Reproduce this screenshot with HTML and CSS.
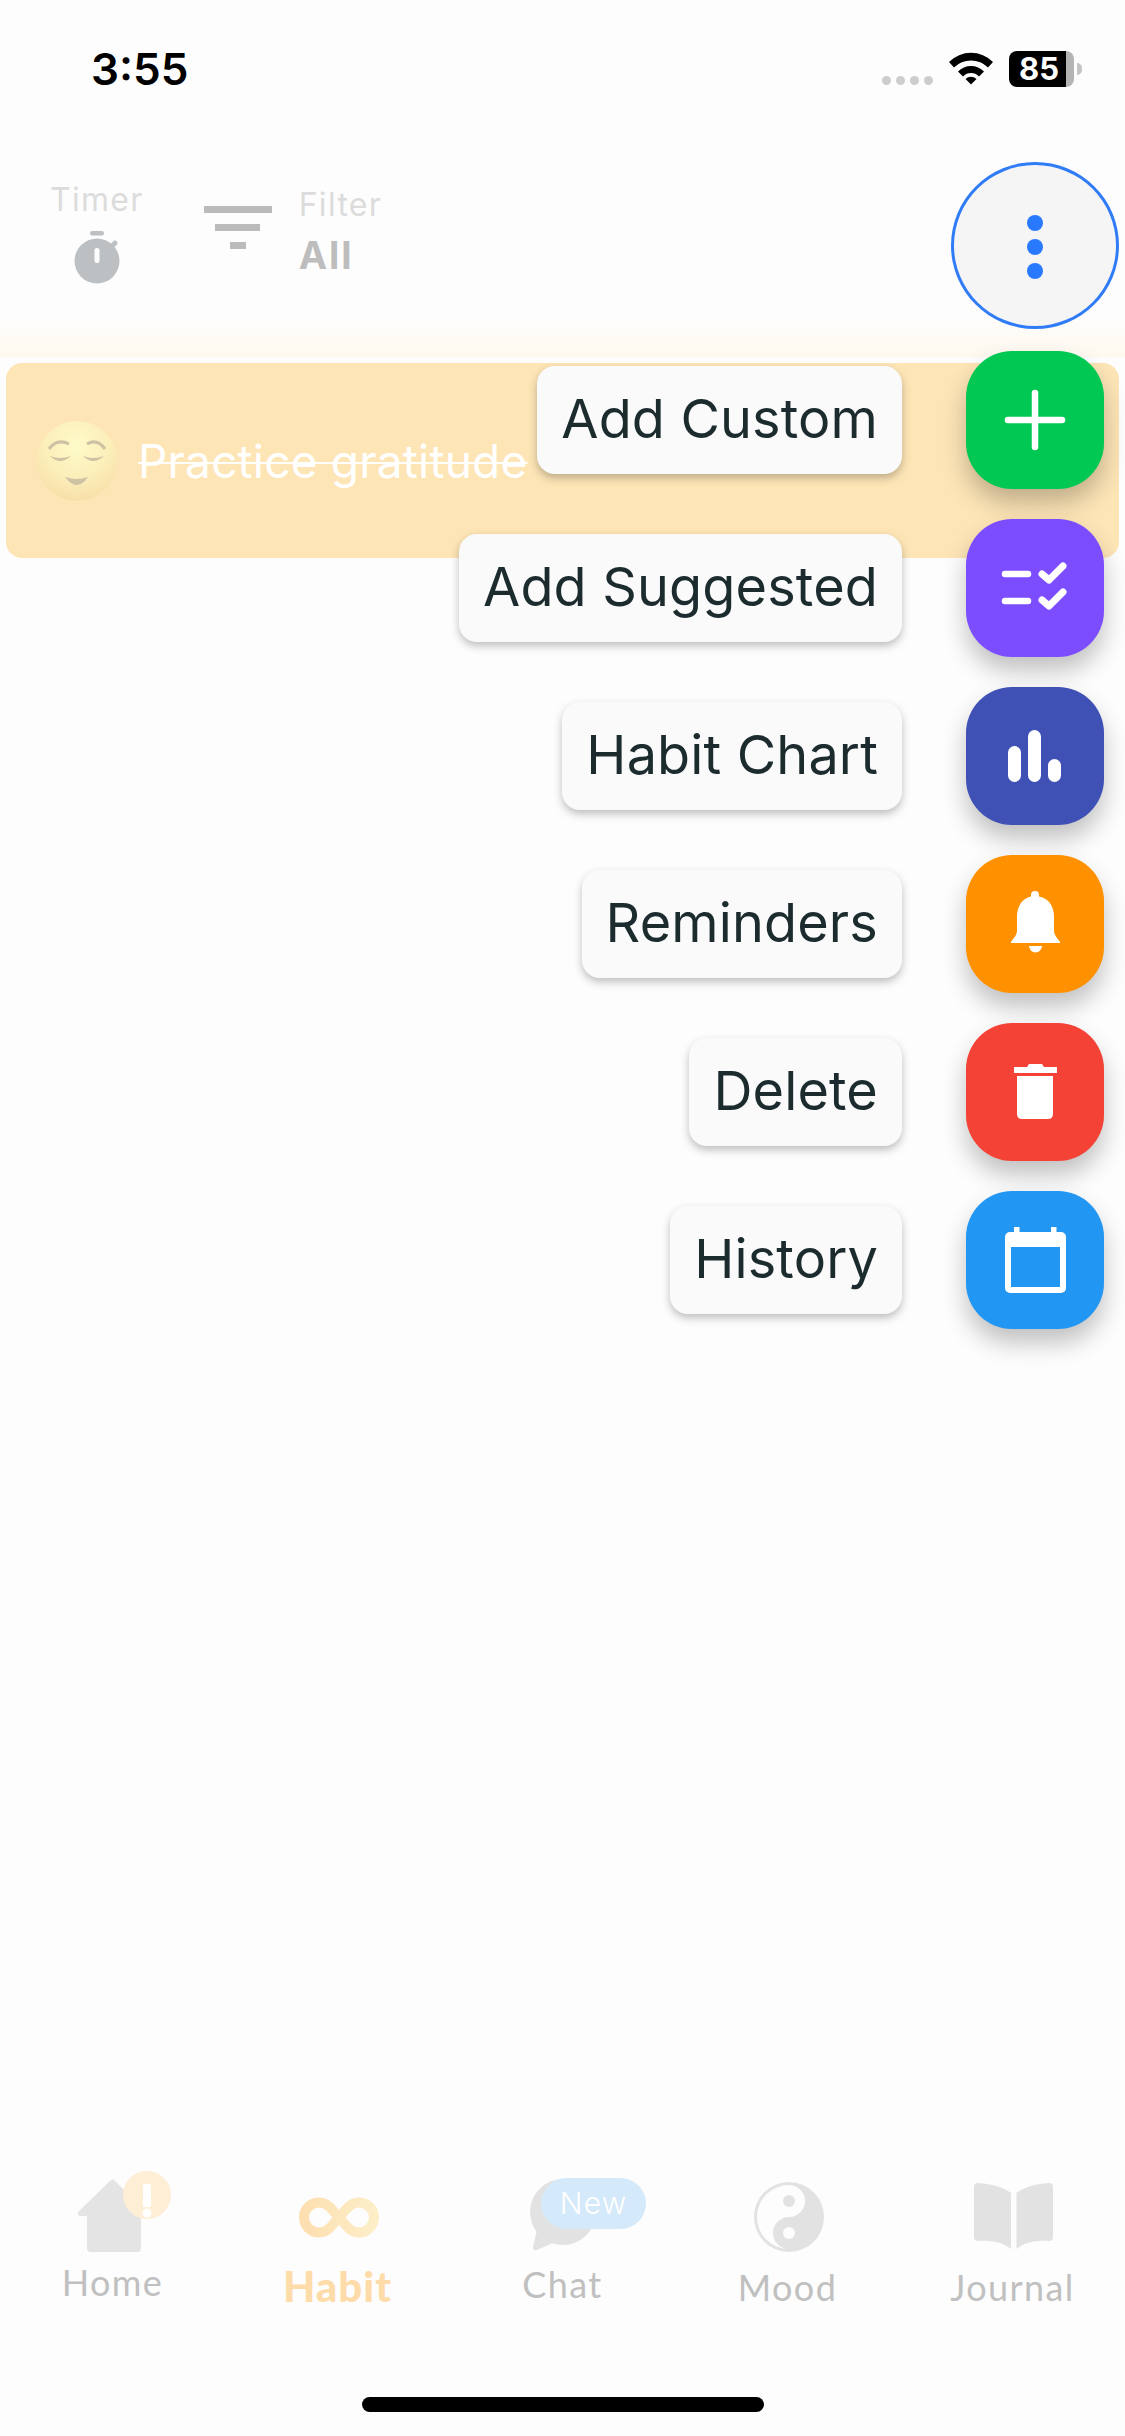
FILE: index.html
```html
<!DOCTYPE html>
<html lang="en">
<head>
    <meta charset="UTF-8">
    <title>Habit</title>
    <link rel="stylesheet" href="styles.css">
</head>
<body>
<div class="screen">
    <div class="status-bar">
        <span class="status-time">3:55</span>
        <div class="status-icons">
            <div class="signal-dots"><i></i><i></i><i></i><i></i></div>
            <svg class="wifi" width="46" height="34" viewBox="0 0 46 34">
                <path d="M1 11 A31 31 0 0 1 45 11 L40 16.5 A24 24 0 0 0 6 16.5Z"/>
                <path d="M10 20.5 A18 18 0 0 1 36 20.5 L31 25.5 A11 11 0 0 0 15 25.5Z"/>
                <path d="M17.500 28 A8 8 0 0 1 28.500 28 L23 33.500Z"/>
            </svg>
            <div class="battery">
                <div class="battery-body"><span class="battery-level">85</span></div>
                <div class="battery-nub"></div>
            </div>
        </div>
    </div>

    <div class="top-bar">
        <div class="timer">
            <span class="top-label">Timer</span>
            <svg width="46" height="54" viewBox="0 0 46 54">
                <rect x="16" y="0" width="14" height="4.500" rx="2.200" fill="#bdc0c2"/>
                <rect x="37" y="9" width="5" height="9" rx="2" transform="rotate(45 39.500 13.500)" fill="#bdc0c2"/>
                <circle cx="23" cy="30" r="22.500" fill="#bdc0c2"/>
                <rect x="20.500" y="17" width="5" height="15" rx="2.500" fill="#fdfdfd"/>
            </svg>
        </div>
        <div class="filter">
            <div class="filter-icon"><i></i><i></i><i></i></div>
            <div class="filter-text">
                <span class="top-label">Filter</span>
                <span class="filter-value">All</span>
            </div>
        </div>
    </div>

    <div class="fade-strip"></div>

    <div class="habit-card">
        <svg width="80" height="80" viewBox="0 0 80 80">
            <defs>
                <radialGradient id="face" cx="50%" cy="30%" r="70%">
                    <stop offset="0" stop-color="#fefbc8"/>
                    <stop offset="0.6" stop-color="#fbeeb9"/>
                    <stop offset="1" stop-color="#f8dfa8"/>
                </radialGradient>
            </defs>
            <circle cx="40" cy="40" r="40" fill="url(#face)"/>
            <path d="M12 28 Q20 17 32 23" class="face-line"/>
            <path d="M50 23 Q60 17 68 28" class="face-line"/>
            <path d="M13 35 Q23 45 34 35 Q23 39 13 35Z" class="face-fill"/>
            <path d="M46 35 Q56 45 67 35 Q56 39 46 35Z" class="face-fill"/>
            <path d="M28 56 Q40 60 51 56 Q40 72 28 56Z" class="face-fill"/>
        </svg>
        <span class="habit-name">Practice gratitude</span>
    </div>

    <div class="tab-bar">
        <div class="tab">
            <svg width="140" height="90" viewBox="0 0 140 90">
                <path d="M71 10 L107 46 H98 V78 Q98 82 94 82 H48 Q44 82 44 78 V46 H37 Q33 44 36 41 L67 11 Q71 8 71 10Z" fill="#e4e4e4"/>
                <circle cx="104" cy="25" r="24" fill="#fdeed5"/>
                <rect x="100" y="14" width="8" height="23" rx="2" fill="#fff"/>
                <circle cx="104" cy="43" r="4.500" fill="#fff"/>
            </svg>
            <span class="tab-label">Home</span>
        </div>
        <div class="tab">
            <svg width="140" height="90" viewBox="0 0 140 90">
                <defs>
                    <linearGradient id="loop" x1="0" x2="1" y1="0" y2="0">
                        <stop offset="0" stop-color="#fddfb0"/>
                        <stop offset="1" stop-color="#fdeec8"/>
                    </linearGradient>
                </defs>
                <path d="M71 47.500 C64 40 60 32.500 51 32.500 A15 15 0 0 0 51 62.500 C60 62.500 64 55 71 47.500 C78 40 82 32.500 91 32.500 A15 15 0 0 1 91 62.500 C82 62.500 78 55 71 47.500Z" fill="none" stroke="url(#loop)" stroke-width="10"/>
            </svg>
            <span class="tab-label tab-label-active">Habit</span>
        </div>
        <div class="tab">
            <svg width="140" height="90" viewBox="0 0 140 90">
                <ellipse cx="70" cy="42" rx="33" ry="33" fill="#e2e2e2"/>
                <path d="M44 60 L40 77 Q40 81 44 80 L60 73Z" fill="#e2e2e2"/>
            </svg>
            <span class="new-badge">New</span>
            <span class="tab-label tab-label-mid">Chat</span>
        </div>
        <div class="tab">
            <svg width="140" height="90" viewBox="0 0 140 90">
                <circle cx="71" cy="47" r="35" fill="#e2e2e2"/>
                <path d="M71 15 A16 16 0 0 1 71 47 A16 16 0 0 0 71 79 A32 32 0 0 1 71 15Z" fill="#fdfdfd"/>
                <circle cx="71" cy="31" r="6" fill="#e2e2e2"/>
                <circle cx="71" cy="63" r="6" fill="#fdfdfd"/>
            </svg>
            <span class="tab-label tab-label-low">Mood</span>
        </div>
        <div class="tab">
            <svg width="140" height="90" viewBox="0 0 140 90">
                <path d="M31 17 Q31 13 35 13 C50 14 62 18 68 23 V79 C60 72 46 70 35 71 Q31 71 31 67Z" fill="#e2e2e2"/>
                <path d="M110 17 Q110 13 106 13 C91 14 79 18 73.500 23 V79 C81 72 95 70 106 71 Q110 71 110 67Z" fill="#e2e2e2"/>
            </svg>
            <span class="tab-label tab-label-low">Journal</span>
        </div>
    </div>
    <div class="home-indicator"></div>

    <div class="fab-menu">
        <div class="menu-toggle"><i></i><i></i><i></i></div>

        <div class="fab-row">
            <span class="fab-label">Add Custom</span>
            <div class="fab fab-green">
                <svg width="138" height="138" viewBox="0 0 138 138">
                    <path d="M69 42 V96 M42 69 H96" stroke="#fff" stroke-width="6.500" stroke-linecap="round"/>
                </svg>
            </div>
        </div>
        <div class="fab-row">
            <span class="fab-label">Add Suggested</span>
            <div class="fab fab-purple">
                <svg width="138" height="138" viewBox="0 0 138 138">
                    <path d="M39 55 H62 M39 82 H62" stroke="#fff" stroke-width="6.500" stroke-linecap="round"/>
                    <path d="M76 55 L83 61 L97 47 M76 81 L83 87 L97 73" fill="none" stroke="#fff" stroke-width="7" stroke-linecap="round" stroke-linejoin="round"/>
                </svg>
            </div>
        </div>
        <div class="fab-row">
            <span class="fab-label">Habit Chart</span>
            <div class="fab fab-indigo">
                <svg width="138" height="138" viewBox="0 0 138 138">
                    <rect x="42" y="59" width="13" height="36" rx="6.500" fill="#fff"/>
                    <rect x="62" y="43" width="13" height="52" rx="6.500" fill="#fff"/>
                    <rect x="82" y="72" width="13" height="23" rx="6.500" fill="#fff"/>
                </svg>
            </div>
        </div>
        <div class="fab-row">
            <span class="fab-label">Reminders</span>
            <div class="fab fab-orange">
                <svg width="138" height="138" viewBox="0 0 138 138">
                    <path d="M69 36 A4 4 0 0 1 73 40 V41.500 C83 43 88 52 88 62 V76 C88 80 92 84 94 87 V88 H45 V87 C47 84 51 80 51 76 V62 C51 52 56 43 65 41.500 V40 A4 4 0 0 1 69 36Z" fill="#fff"/>
                    <path d="M63 91 H76 A6.500 6.500 0 0 1 63 91Z" fill="#fff"/>
                </svg>
            </div>
        </div>
        <div class="fab-row">
            <span class="fab-label">Delete</span>
            <div class="fab fab-red">
                <svg width="138" height="138" viewBox="0 0 138 138">
                    <path d="M48 44 H61 L63 41 H76 L78 44 H91 V50 H48Z" fill="#fff"/>
                    <path d="M51 53 H87 V91 Q87 96 82 96 H56 Q51 96 51 91Z" fill="#fff"/>
                </svg>
            </div>
        </div>
        <div class="fab-row">
            <span class="fab-label">History</span>
            <div class="fab fab-blue">
                <svg width="138" height="138" viewBox="0 0 138 138">
                    <rect x="48" y="36" width="5.500" height="8" fill="#fff"/>
                    <rect x="85" y="36" width="5.500" height="8" fill="#fff"/>
                    <rect x="39" y="41" width="61" height="61" rx="5" fill="#fff"/>
                    <rect x="45" y="56" width="49" height="40" fill="#2196f3"/>
                </svg>
            </div>
        </div>
    </div>
</div>
</body>
</html>
```

FILE: styles.css
```css
* {
    box-sizing: border-box;
}

body {
    margin: 0;
    background: #fdfdfd;
}

.screen {
    position: relative;
    width: 1125px;
    height: 2436px;
    overflow: hidden;
    display: flex;
    flex-direction: column;
    background: #fdfdfd;
    font-family: "Inter", "Liberation Sans", sans-serif;
}

/* status bar */
.status-bar {
    height: 170px;
    padding: 42px 43px 0 91px;
    display: flex;
    justify-content: space-between;
    align-items: flex-start;
    flex-shrink: 0;
}

.status-time {
    font-size: 44px;
    line-height: 54px;
    font-weight: 600;
    color: #000;
}

.status-icons {
    display: flex;
    align-items: flex-end;
    gap: 15px;
    padding-top: 9px;
}

.signal-dots {
    display: flex;
    gap: 5px;
    padding-bottom: 2px;
}

.signal-dots i {
    width: 9px;
    height: 9px;
    border-radius: 50%;
    background: #cdcdcd;
}

.wifi {
    fill: #000;
    margin-bottom: 2px;
}

.battery {
    display: flex;
    align-items: center;
    gap: 3px;
}

.battery-body {
    width: 65px;
    height: 36px;
    border-radius: 8px;
    background: linear-gradient(to right, #000 87%, #b4b4b4 87%);
    padding-left: 10px;
}

.battery-level {
    font-size: 31px;
    line-height: 36px;
    font-weight: 700;
    color: #fff;
    display: block;
}

.battery-nub {
    width: 5px;
    height: 12px;
    border-radius: 0 5px 5px 0;
    background: #c4c4c4;
}

/* timer + filter */
.top-bar {
    height: 150px;
    padding: 10px 0 0 50px;
    display: flex;
    align-items: flex-start;
    gap: 60px;
    flex-shrink: 0;
}

.timer {
    display: flex;
    flex-direction: column;
    align-items: center;
    gap: 11px;
}

.top-label {
    font-size: 32px;
    line-height: 40px;
    letter-spacing: 1.3px;
    color: #dcdcdc;
}

.filter {
    display: flex;
    gap: 27px;
}

.filter-icon {
    width: 68px;
    padding-top: 26px;
    display: flex;
    flex-direction: column;
    align-items: center;
    gap: 11px;
}

.filter-icon i {
    height: 7px;
    background: #bbb;
}

.filter-icon i:nth-child(1) {
    width: 68px;
}

.filter-icon i:nth-child(2) {
    width: 45px;
}

.filter-icon i:nth-child(3) {
    width: 16px;
}

.filter-text {
    display: flex;
    flex-direction: column;
    padding-top: 5px;
    gap: 7px;
}

.filter-value {
    font-size: 38px;
    line-height: 46px;
    font-weight: 700;
    letter-spacing: 2px;
    color: #bdbdbd;
}

.fade-strip {
    height: 37px;
    flex-shrink: 0;
    background: linear-gradient(to bottom, #fefdfb, #fef9f0);
}

/* habit row */
.habit-card {
    height: 195px;
    margin: 6px 6px 0;
    padding-left: 31px;
    display: flex;
    align-items: center;
    gap: 21px;
    border-radius: 16px;
    background: #fde5b6;
    flex-shrink: 0;
}

.habit-name {
    font-size: 46px;
    letter-spacing: 0.2px;
    color: #fff;
    text-decoration: line-through;
    text-decoration-thickness: 2px;
}

.face-line {
    fill: none;
    stroke: #cdc2a4;
    stroke-width: 3;
}

.face-fill {
    fill: #cdc2a4;
}

/* bottom tabs */
.tab-bar {
    margin-top: auto;
    height: 227px;
    display: grid;
    grid-template-columns: repeat(5, 1fr);
    flex-shrink: 0;
}

.tab {
    position: relative;
    display: flex;
    flex-direction: column;
    align-items: center;
}

.tab-label {
    font-family: "Lato", sans-serif;
    font-size: 36px;
    line-height: 44px;
    letter-spacing: 1.4px;
    color: #c0c0c0;
}

.tab-label-active {
    margin-top: 4px;
    font-size: 42px;
    font-weight: 900;
    letter-spacing: 1px;
    color: #fddcaa;
}

.tab-label-mid {
    margin-top: 2px;
}

.tab-label-low {
    margin-top: 5px;
}

.new-badge {
    position: absolute;
    top: 8px;
    left: 91px;
    width: 105px;
    height: 51px;
    border-radius: 26px;
    background: #d4e9f9;
    color: #fff;
    font-size: 30px;
    font-weight: 300;
    line-height: 50px;
    text-align: center;
    letter-spacing: 1.2px;
}

.home-indicator {
    width: 402px;
    height: 15px;
    margin: 0 auto 24px;
    border-radius: 8px;
    background: #000;
    flex-shrink: 0;
}

/* floating menu */
.fab-menu {
    position: absolute;
    top: 162px;
    right: 6px;
    display: flex;
    flex-direction: column;
    align-items: flex-end;
    gap: 30px;
}

.menu-toggle {
    width: 168px;
    height: 167px;
    margin-bottom: -8px;
    padding-top: 2px;
    border: 3px solid #2f7cf6;
    border-radius: 50%;
    background: #f5f5f5;
    display: flex;
    flex-direction: column;
    align-items: center;
    justify-content: center;
    gap: 8px;
}

.menu-toggle i {
    width: 16px;
    height: 16px;
    border-radius: 50%;
    background: #2979ff;
}

.fab-row {
    display: flex;
    align-items: center;
    gap: 64px;
    padding-right: 15px;
}

.fab-label {
    height: 108px;
    padding: 0 24px;
    border-radius: 18px;
    background: #fafafa;
    box-shadow: 0 4px 8px rgba(0, 0, 0, 0.25);
    font-size: 54px;
    line-height: 106px;
    letter-spacing: 0.15px;
    color: #1c2b2e;
}

.fab {
    width: 138px;
    height: 138px;
    border-radius: 46px;
    box-shadow: 0 14px 24px rgba(0, 0, 0, 0.24);
}

.fab svg {
    display: block;
}

.fab-green {
    background: #00c853;
}

.fab-purple {
    background: #7c4dff;
}

.fab-indigo {
    background: #3f51b5;
}

.fab-orange {
    background: #ff9100;
}

.fab-red {
    background: #f44336;
}

.fab-blue {
    background: #2196f3;
}
```
